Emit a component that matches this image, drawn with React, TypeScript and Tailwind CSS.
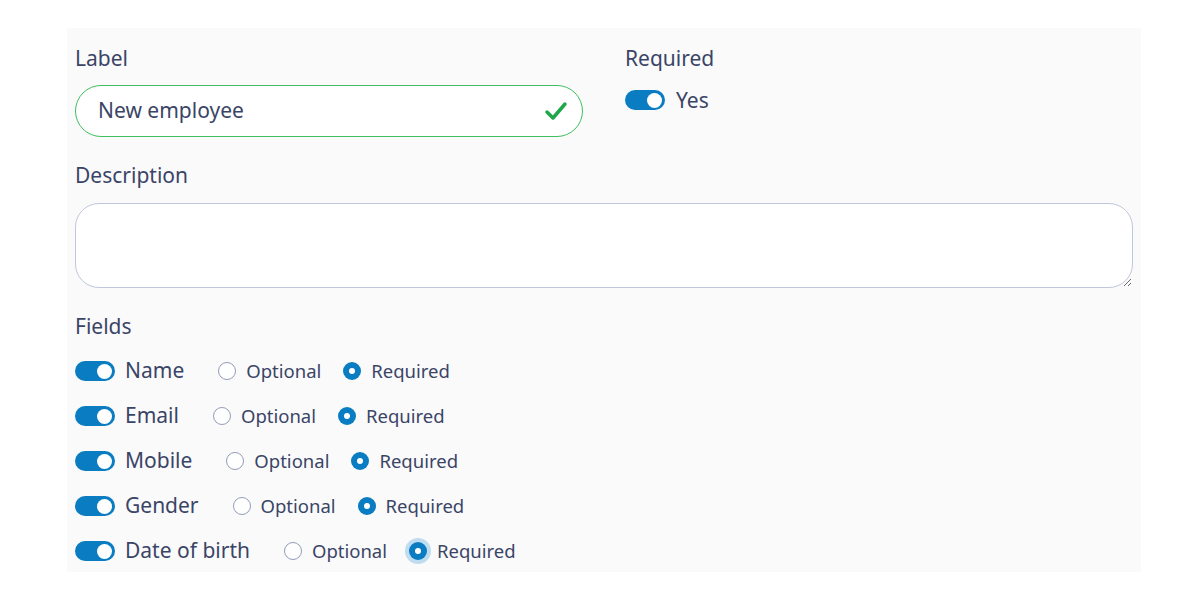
import { useState } from "react";

type Field = { name: string; required: boolean; enabled: boolean };

const initialFields: Field[] = [
  { name: "Name", required: true, enabled: true },
  { name: "Email", required: true, enabled: true },
  { name: "Mobile", required: true, enabled: true },
  { name: "Gender", required: true, enabled: true },
  { name: "Date of birth", required: true, enabled: true },
];

const Toggle = ({ on, onClick }: { on: boolean; onClick: () => void }) => (
  <button
    onClick={onClick}
    className={`relative w-[40px] h-[20px] rounded-full shrink-0 transition-colors ${on ? "bg-[#0a7cc1]" : "bg-[#c7cde0]"}`}
  >
    <span
      className={`absolute top-[2.5px] w-[15px] h-[15px] rounded-full bg-white transition-all ${on ? "left-[22px]" : "left-[3px]"}`}
    />
  </button>
);

const Radio = ({ checked, focus, label, onClick }: { checked: boolean; focus?: boolean; label: string; onClick: () => void }) => (
  <label onClick={onClick} className="flex items-center gap-[10px] cursor-pointer">
    {checked ? (
      <span
        className={`w-[18px] h-[18px] rounded-full bg-[#0a7cc1] flex items-center justify-center ${focus ? "ring-4 ring-[#bfdcf0]" : ""}`}
      >
        <span className="w-[6px] h-[6px] rounded-full bg-white" />
      </span>
    ) : (
      <span className="w-[18px] h-[18px] rounded-full bg-white border-[1.5px] border-[#939cb8]" />
    )}
    <span className="text-[18.5px] text-[#3a4566]">{label}</span>
  </label>
);

export default function App() {
  const [fields, setFields] = useState(initialFields);
  const [required, setRequired] = useState(true);

  const update = (i: number, patch: Partial<Field>) =>
    setFields(fields.map((f, idx) => (idx === i ? { ...f, ...patch } : f)));

  return (
    <div className="w-[1200px] h-[600px] bg-white pt-[28px] pl-[67px]" style={{ fontFamily: "'Noto Sans', sans-serif" }}>
      <div className="w-[1074px] h-[544px] bg-[#fafafb] px-[8px] pt-[16px] text-[#3a4566]">
        {/* Label + Required */}
        <div className="flex">
          <div className="w-[508px]">
            <div className="text-[21px] leading-[28px]">Label</div>
            <div className="mt-[13px] h-[52px] rounded-full border-[1.5px] border-[#3fbf5f] bg-white flex items-center pl-[22px] pr-[14px]">
              <input
                defaultValue="New employee"
                className="flex-1 text-[21px] text-[#3a4566] outline-none bg-transparent"
              />
              <svg width="24" height="24" viewBox="0 0 24 24" fill="none" stroke="#1fa84a" strokeWidth="3.5" strokeLinecap="round" strokeLinejoin="round">
                <path d="M3 13l6 6L21 5" />
              </svg>
            </div>
          </div>
          <div className="ml-[42px]">
            <div className="text-[21px] leading-[28px]">Required</div>
            <div className="mt-[16px] flex items-center gap-[11px]">
              <Toggle on={required} onClick={() => setRequired(!required)} />
              <span className="text-[21px] leading-[24px]">{required ? "Yes" : "No"}</span>
            </div>
          </div>
        </div>

        {/* Description */}
        <div className="mt-[24px] text-[21px] leading-[28px]">Description</div>
        <textarea className="mt-[14px] block w-full h-[85px] rounded-[24px] border-[1.5px] border-[#c0c6db] bg-white outline-none px-[22px] py-[12px] text-[18px]" />

        {/* Fields */}
        <div className="mt-[24px] text-[21px] leading-[28px]">Fields</div>
        <div className="mt-[17px] flex flex-col gap-[17px]">
          {fields.map((f, i) => (
            <div key={f.name} className="flex items-center h-[28px]">
              <Toggle on={f.enabled} onClick={() => update(i, { enabled: !f.enabled })} />
              <span className="ml-[10px] text-[21px]">{f.name}</span>
              <div className="ml-[34px] flex items-center gap-[22px]">
                <Radio checked={!f.required} label="Optional" onClick={() => update(i, { required: false })} />
                <Radio checked={f.required} focus={i === fields.length - 1} label="Required" onClick={() => update(i, { required: true })} />
              </div>
            </div>
          ))}
        </div>
      </div>
    </div>
  );
}
